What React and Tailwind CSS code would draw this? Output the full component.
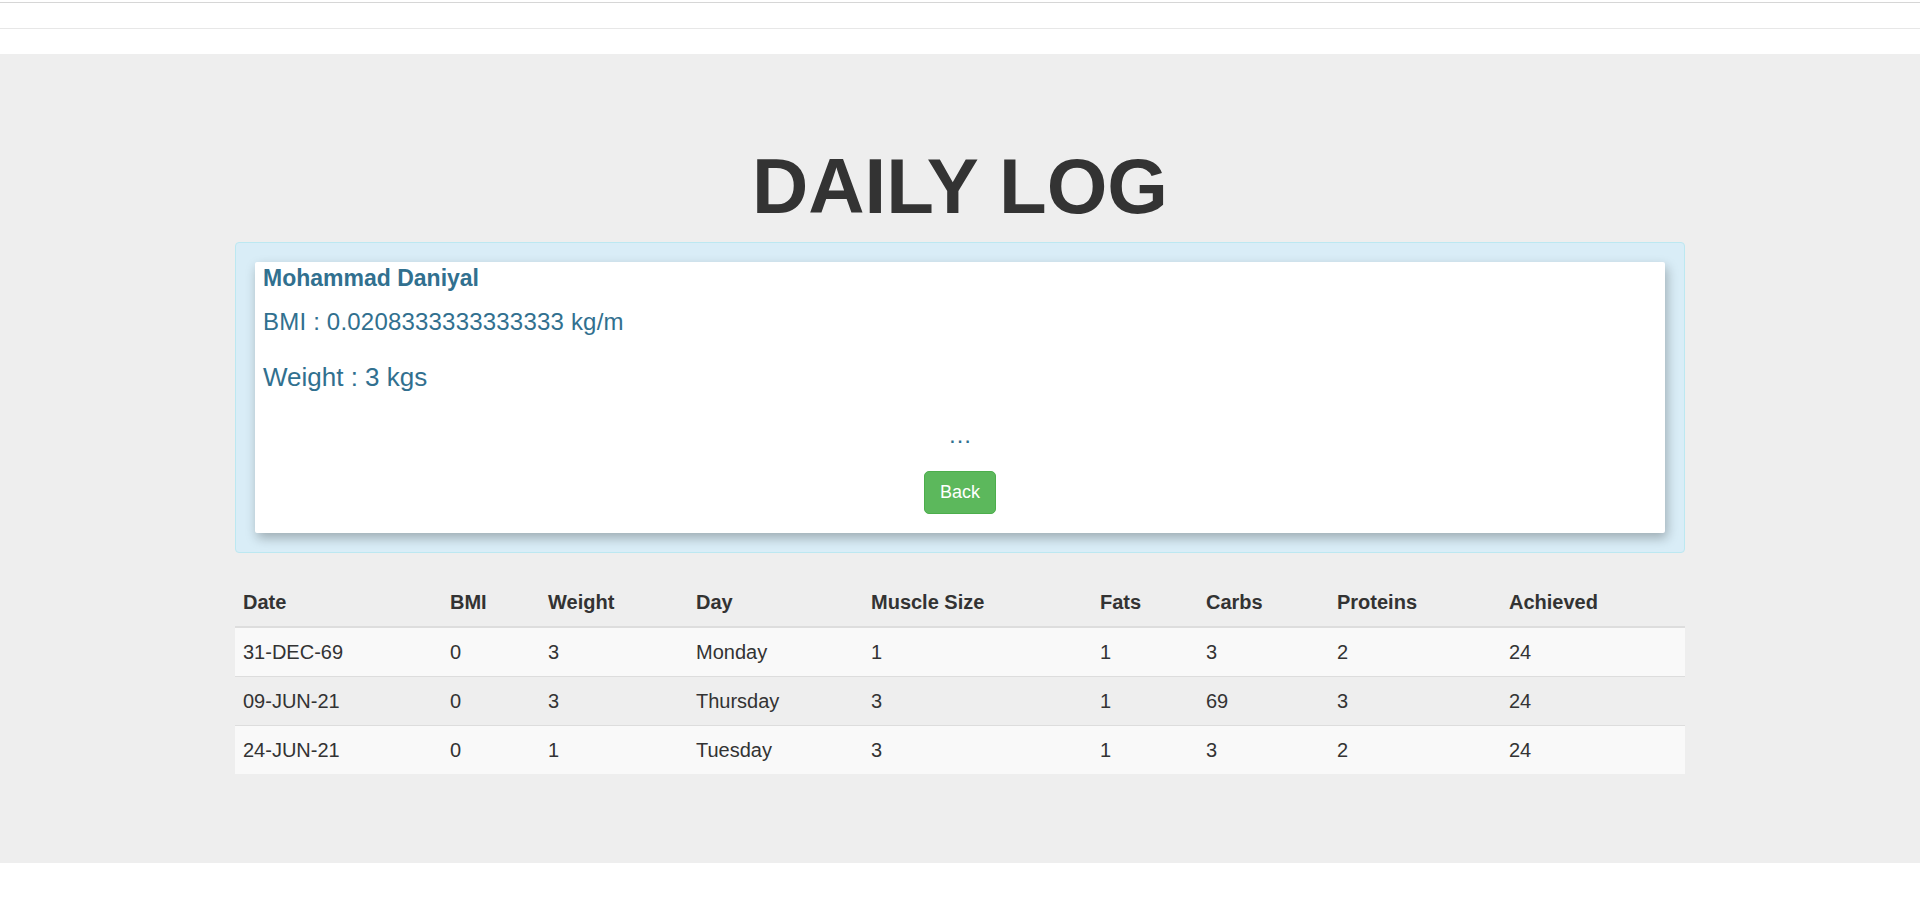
const cols = [
  { key: "date", label: "Date", w: "w-[207px]" },
  { key: "bmi", label: "BMI", w: "w-[98px]" },
  { key: "weight", label: "Weight", w: "w-[148px]" },
  { key: "day", label: "Day", w: "w-[175px]" },
  { key: "muscle", label: "Muscle Size", w: "w-[229px]" },
  { key: "fats", label: "Fats", w: "w-[106px]" },
  { key: "carbs", label: "Carbs", w: "w-[131px]" },
  { key: "proteins", label: "Proteins", w: "w-[172px]" },
  { key: "achieved", label: "Achieved", w: "w-[184px]" },
];

const logs = [
  { date: "31-DEC-69", bmi: 0, weight: 3, day: "Monday", muscle: 1, fats: 1, carbs: 3, proteins: 2, achieved: 24 },
  { date: "09-JUN-21", bmi: 0, weight: 3, day: "Thursday", muscle: 3, fats: 1, carbs: 69, proteins: 3, achieved: 24 },
  { date: "24-JUN-21", bmi: 0, weight: 1, day: "Tuesday", muscle: 3, fats: 1, carbs: 3, proteins: 2, achieved: 24 },
];

export default function App() {
  return (
    <div className="min-h-screen bg-white text-[#333] font-['Liberation_Sans',Arial,sans-serif]">
      {/* navbar remnants */}
      <div className="pt-[2px]">
        <div className="h-[26px] border-t border-[#d6d6d6]" />
        <div className="h-[26px] border-t border-[#e7e7e7]" />
      </div>

      <div className="bg-[#eeeeee] h-[809px] pt-[90px]">
        <h1 className="text-center text-[78px] leading-[85px] font-bold text-[#333]">DAILY LOG</h1>

        <div className="w-[1450px] mx-auto mt-[13px]">
          <div className="bg-[#d9edf7] border border-[#bce8f1] rounded-[4px] p-[19px]">
            <div className="bg-white rounded-[2px] shadow-[2px_5px_12px_rgba(0,0,0,0.28)] pt-[4px] pb-[19px] pl-[8px] text-[#31708f]">
              <div className="text-[23px] leading-[25px] font-bold">Mohammad Daniyal</div>
              <div className="mt-[18px] text-[24px] leading-[26px] tracking-[0.2px]">BMI : 0.0208333333333333 kg/m</div>
              <div className="mt-[28px] text-[26px] leading-[28px]">Weight : 3 kgs</div>
              <div className="mt-[31px] text-[24px] leading-[26px] text-center pr-[8px]">…</div>
              <div className="mt-[23px] flex justify-center pr-[8px]">
                <button className="w-[72px] h-[43px] flex items-center justify-center bg-[#5cb85c] border border-[#4cae4c] rounded-[5px] text-white text-[18px]">
                  Back
                </button>
              </div>
            </div>
          </div>

          <table className="mt-[25px] w-full table-fixed border-collapse text-[20px]">
            <thead>
              <tr>
                {cols.map((c) => (
                  <th key={c.key} className={`${c.w} text-left font-bold px-2 py-2 leading-[32px] border-b-2 border-[#dddddd]`}>
                    {c.label}
                  </th>
                ))}
              </tr>
            </thead>
            <tbody>
              {logs.map((row, i) => (
                <tr key={i} className={i % 2 === 0 ? "bg-[#f9f9f9]" : ""}>
                  {cols.map((c) => (
                    <td key={c.key} className={`px-2 py-2 leading-[32px] ${i > 0 ? "border-t border-[#dddddd]" : ""}`}>
                      {row[c.key]}
                    </td>
                  ))}
                </tr>
              ))}
            </tbody>
          </table>
        </div>
      </div>
    </div>
  );
}
